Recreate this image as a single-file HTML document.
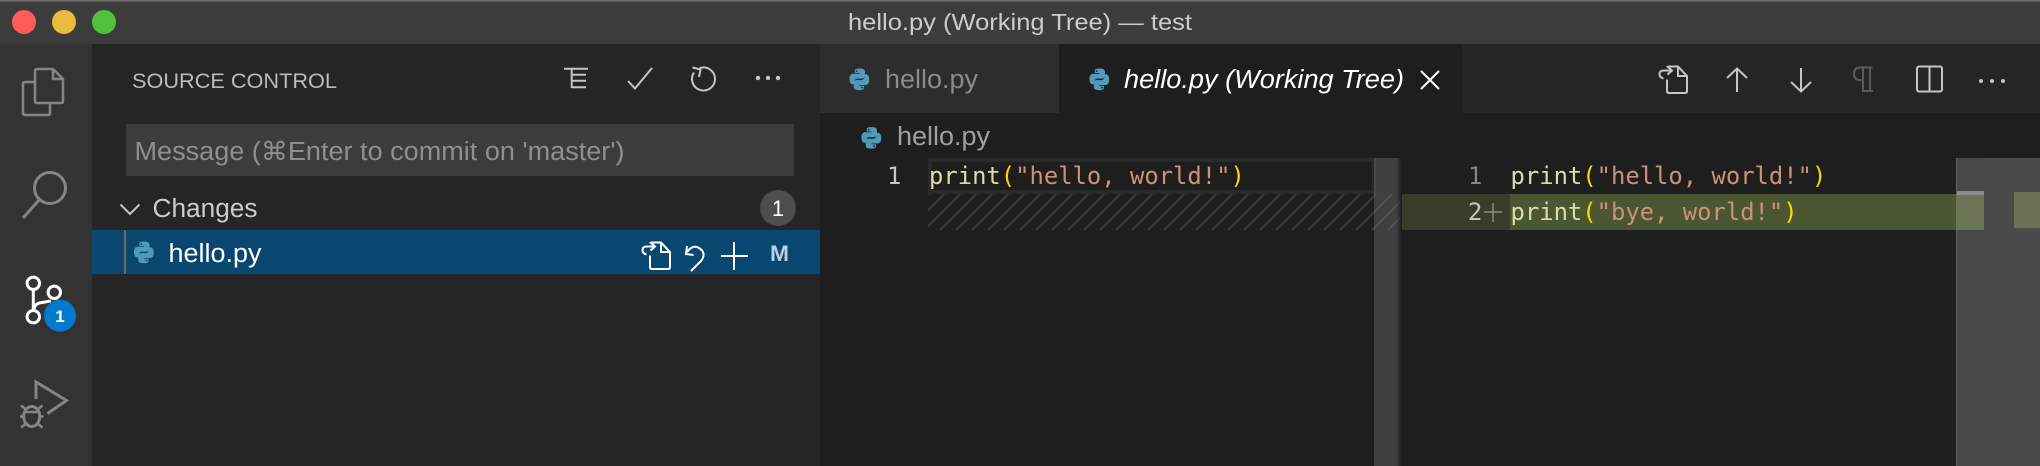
<!DOCTYPE html>
<html><head><meta charset="utf-8"><title>hello.py (Working Tree) — test</title>
<style>
html,body{margin:0;padding:0;background:#1e1e1e;width:2040px;height:466px;overflow:hidden}
svg{display:block}
.ui{font-family:"Liberation Sans","DejaVu Sans",sans-serif}
.m{font-family:"DejaVu Sans Mono","Liberation Mono",monospace;font-size:23.85px}
.f{fill:#dcdcaa}.p{fill:#ffd700}.s{fill:#ce9178}
</style></head><body>
<svg xmlns="http://www.w3.org/2000/svg" width="2040" height="466" viewBox="0 0 2040 466">
<defs>
<g id="py"><path fill="#519aba" fill-rule="evenodd" d="M11.900 1.500C7.200 1.500 7.600 3.500 7.600 3.500V5.800h4.500v.7H5.900S2.400 6.200 2.400 11.600s3 5.200 3 5.200h1.800v-2.500s-.1-3 3-3h4.400s2.800 0 2.800-2.700V4.200s.4-2.700-5.500-2.700zM9.400 3.100a.85.85 0 1 1 0 1.700.85.85 0 0 1 0-1.700z"/><path fill="#519aba" fill-rule="evenodd" transform="rotate(180 12 12)" d="M11.900 1.500C7.200 1.500 7.600 3.500 7.600 3.500V5.800h4.500v.7H5.900S2.400 6.200 2.400 11.600s3 5.200 3 5.200h1.800v-2.500s-.1-3 3-3h4.400s2.800 0 2.800-2.700V4.200s.4-2.700-5.500-2.700zM9.400 3.100a.85.85 0 1 1 0 1.700.85.85 0 0 1 0-1.700z"/></g>
<pattern id="h" width="16" height="36" patternUnits="userSpaceOnUse" patternTransform="translate(943 194) skewX(-45)"><rect width="2.400" height="36" fill="#404040"/></pattern>
<linearGradient id="sh" x1="0" x2="1" y1="0" y2="0"><stop offset="0" stop-color="#1e1e1e" stop-opacity="0"/><stop offset="1" stop-color="#1b1b1b"/></linearGradient>
<g id="openf" fill="none" stroke-width="2"><path d="M9 14.500V26q0 2 2 2h16q2 0 2-2V11L20 1.500H11q-1.500 0-2 1"/><path d="M20 1.500V11h9"/><path d="M14 5.500H6Q1.500 5.500 1.500 9t4 4.500M9.500 1.500l4.500 4-4.500 4"/></g>
</defs>

<rect width="2040" height="466" fill="#1e1e1e"/>
<rect width="2040" height="44" fill="#3c3c3c"/>
<rect width="2040" height="1.500" fill="#6e6e6e"/>
<circle cx="24" cy="22" r="12" fill="#fe5c57"/><circle cx="64" cy="22" r="12" fill="#e6bd3c"/><circle cx="104" cy="22" r="12" fill="#4fc23b"/>
<text class="ui" x="848" y="30" font-size="23" fill="#cccccc" textLength="344" lengthAdjust="spacingAndGlyphs">hello.py (Working Tree) — test</text>

<rect x="0" y="44" width="92" height="422" fill="#333333"/>
<rect x="92" y="44" width="728" height="422" fill="#252526"/>

<g fill="none" stroke="#858585" stroke-width="2.500" stroke-linejoin="round">
<path d="M35 82H25q-2 0-2 2v29q0 2 2 2h23q2 0 2-2V104"/>
<path d="M37 69h16l10 10v22q0 2-2 2H37q-2 0-2-2V71q0-2 2-2z"/><path d="M53 69v10h10"/>
<circle cx="50" cy="188" r="15.500" stroke-width="3"/><path d="M39.500 199.500 23 218" stroke-width="3"/>
</g>
<g fill="none" stroke="#ffffff" stroke-width="3">
<circle cx="33.300" cy="283.300" r="6.200"/><circle cx="54.300" cy="292.300" r="6.200"/><circle cx="33.300" cy="316.700" r="6.200"/>
<path d="M33.300 289.500v21M34 309q1-6 8-6.500l9-1.500"/>
</g>
<circle cx="60" cy="315.700" r="16" fill="#007acc"/>
<text class="ui" x="60" y="322" font-size="17" font-weight="bold" fill="#fff" text-anchor="middle">1</text>
<g fill="none" stroke="#858585" stroke-width="3">
<path d="M36 399V382L66.500 400.500 47.500 413.500"/>
<ellipse cx="31.700" cy="416.500" rx="8" ry="10"/>
<path d="M24 412h15.500M21 405.500l5 4M42.500 405.500l-5 4M21 427.500l5-4M42.500 427.500l-5-4M20 416.500h4M39.500 416.500h4" stroke-width="2.600"/>
</g>

<text class="ui" x="132" y="88" font-size="21" fill="#bbbbbb" textLength="205" lengthAdjust="spacingAndGlyphs">SOURCE CONTROL</text>
<g fill="none" stroke="#c5c5c5" stroke-width="2">
<path d="M564 68.700h24M571.700 68.700V88M571.700 74.700H586M571.700 80.800H586M571.700 87.300H586"/>
<path d="M628 81l7 7.500L652 68"/>
<path d="M699.500 68.200A11.500 11.500 0 1 1 694 72.500"/><path d="M692.500 67.500l8 2-1.500 7.500"/>
</g>
<g fill="#c5c5c5"><circle cx="758" cy="78" r="2.200"/><circle cx="768" cy="78" r="2.200"/><circle cx="778" cy="78" r="2.200"/></g>

<rect x="126" y="124" width="668" height="52" fill="#3c3c3c"/>
<text class="ui" x="134.500" y="160" font-size="25.500" fill="#8f8f8f" textLength="490" lengthAdjust="spacingAndGlyphs">Message (⌘Enter to commit on 'master')</text>

<path d="M120.500 204.500l9.500 9.500 9.500-9.500" fill="none" stroke="#c5c5c5" stroke-width="2"/>
<text class="ui" x="152.500" y="217" font-size="25.500" fill="#cccccc" textLength="105" lengthAdjust="spacingAndGlyphs">Changes</text>
<circle cx="778" cy="208" r="18" fill="#4d4d4d"/>
<text class="ui" x="778" y="216" font-size="22" fill="#ffffff" text-anchor="middle">1</text>

<rect x="92" y="230" width="728" height="44" fill="#094771"/>
<rect x="124" y="230" width="2" height="44" fill="#6b6b6b"/>
<use href="#py" transform="translate(131.500 240) scale(1.030)"/>
<text class="ui" x="168.500" y="262" font-size="25.500" fill="#ffffff" textLength="93" lengthAdjust="spacingAndGlyphs">hello.py</text>
<use href="#openf" stroke="#ffffff" transform="translate(641 241)"/>
<g fill="none" stroke="#ffffff" stroke-width="2">
<path d="M687 246l-1 8 7.500 1M687 252q6-8 12-4 8 5 2 13l-10 10"/>
<path d="M734 242v28M721 256h27"/>
</g>
<text class="ui" x="770" y="261" font-size="22" font-weight="bold" fill="#b5d0e2" textLength="19" lengthAdjust="spacingAndGlyphs">M</text>

<rect x="820" y="44" width="1220" height="69" fill="#252526"/>
<rect x="820" y="44" width="239" height="69" fill="#2d2d2d"/>
<rect x="1059" y="44" width="403" height="69" fill="#1e1e1e"/>
<use href="#py" transform="translate(847 67) scale(1.030)"/>
<text class="ui" x="885" y="88" font-size="25.500" fill="#8b8b8b" textLength="93" lengthAdjust="spacingAndGlyphs">hello.py</text>
<use href="#py" transform="translate(1087 67) scale(1.030)"/>
<text class="ui" x="1124" y="88" font-size="25.500" font-style="italic" fill="#ffffff" textLength="280" lengthAdjust="spacingAndGlyphs">hello.py (Working Tree)</text>
<path d="M1421 71l18 18M1439 71l-18 18" stroke="#ffffff" stroke-width="2" fill="none"/>

<use href="#openf" stroke="#c5c5c5" transform="translate(1658 65)"/>
<g fill="none" stroke="#c5c5c5" stroke-width="2">
<path d="M1737 92V68.500M1727 78l10-9.500 10 9.500"/>
<path d="M1801 68v23.500M1791 82l10 9.500 10-9.500"/>
<rect x="1917" y="66.500" width="25" height="25" rx="2"/><path d="M1929.500 66.500v25"/>
</g>
<g fill="none" stroke="#5a5a5a" stroke-width="2">
<path d="M1872.500 67.500h-12.500q-6 0-6 6.300t6 6.300h3M1863 67.500v24M1870 67.500v24M1862 91h11"/>
</g>
<g fill="#c5c5c5"><circle cx="1981" cy="81" r="2"/><circle cx="1992" cy="81" r="2"/><circle cx="2003" cy="81" r="2"/></g>

<use href="#py" transform="translate(859 125.500) scale(1.030)"/>
<text class="ui" x="897" y="145" font-size="25.500" fill="#a0a0a0" textLength="93" lengthAdjust="spacingAndGlyphs">hello.py</text>

<rect x="930" y="160" width="444" height="32" fill="none" stroke="#2a2a2a" stroke-width="4"/>
<rect x="928" y="194" width="474" height="36" fill="url(#h)"/>
<rect x="1374" y="158" width="28" height="308" fill="#797979" fill-opacity=".38"/>
<rect x="1396" y="158" width="6" height="308" fill="url(#sh)"/>

<text class="m" x="887" y="184" fill="#c6c6c6">1</text>
<text class="m" x="929" y="184" xml:space="preserve"><tspan class="f">print</tspan><tspan class="p">(</tspan><tspan class="s">"hello, world!"</tspan><tspan class="p">)</tspan></text>

<rect x="1402" y="194" width="108" height="36" fill="#373d29"/>
<rect x="1510" y="194" width="446" height="36" fill="#4b5632"/>
<text class="m" x="1468" y="184" fill="#858585">1</text>
<text class="m" x="1468" y="220" fill="#c6c6c6">2</text>
<path d="M1484 212h18M1493 203v19" stroke="#8b8f80" stroke-width="1.500" fill="none"/>
<text class="m" x="1510.500" y="184" xml:space="preserve"><tspan class="f">print</tspan><tspan class="p">(</tspan><tspan class="s">"hello, world!"</tspan><tspan class="p">)</tspan></text>
<text class="m" x="1510.500" y="220" xml:space="preserve"><tspan class="f">print</tspan><tspan class="p">(</tspan><tspan class="s">"bye, world!"</tspan><tspan class="p">)</tspan></text>

<rect x="1956" y="158" width="84" height="308" fill="#4a4a4a"/>
<rect x="1956" y="158" width="28" height="308" fill="#484848"/>
<rect x="1956" y="158" width="1" height="308" fill="#5e5e5e"/>
<rect x="1956" y="194" width="28" height="36" fill="#6c7456"/>
<rect x="1957" y="191" width="27" height="4" fill="#8c8c8c"/>
<rect x="2014" y="192" width="26" height="36" fill="#6a7355"/>
</svg>
</body></html>
